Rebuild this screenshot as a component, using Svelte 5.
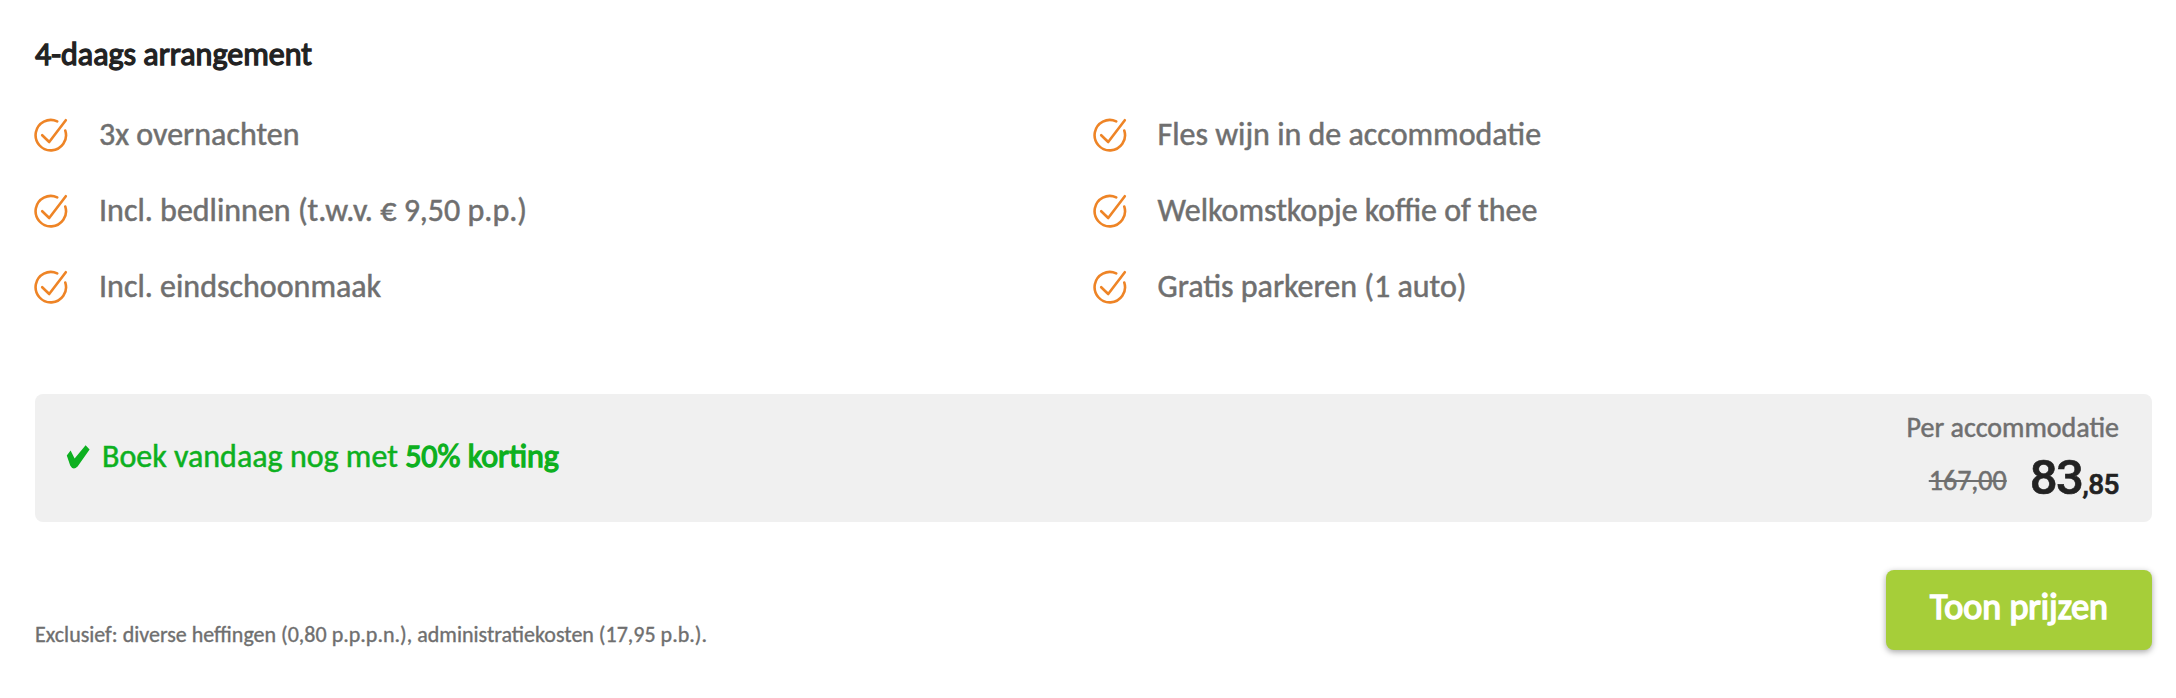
<script>
  const usps = [
    { text: "3x overnachten" },
    { text: "Fles wijn in de accommodatie" },
    { text: "Incl. bedlinnen (t.w.v. € 9,50 p.p.)" },
    { text: "Welkomstkopje koffie of thee" },
    { text: "Incl. eindschoonmaak" },
    { text: "Gratis parkeren (1 auto)" },
  ];
</script>

<section class="arrangement">
  <h2>4-daags arrangement</h2>

  <ul class="usps">
    {#each usps as usp}
      <li>
        <svg class="icon" viewBox="0 0 34 34" fill="none">
          <path d="M23.2 3.4A15.2 15.2 0 1 0 31.3 12.6" />
          <path d="M8.2 17.2L15.2 24L31.8 2.2" />
        </svg>
        <span>{usp.text}</span>
      </li>
    {/each}
  </ul>

  <div class="price-bar">
    <div class="discount">
      <svg class="check" viewBox="0 0 24 24">
        <path d="M0.8 10.6L4.6 5.6L8.6 13.4L19.6 0.3L23.6 4.6L11.6 21.4Q7.2 26 4.2 20.4Z" />
      </svg>
      <p>Boek vandaag nog met <strong>50% korting</strong></p>
    </div>
    <div class="price">
      <span class="label">Per accommodatie</span>
      <div class="amounts">
        <span class="old">167,00</span>
        <span class="new">83<small>,85</small></span>
      </div>
    </div>
  </div>

  <div class="bottom">
    <p class="costs">Exclusief: diverse heffingen (0,80 p.p.p.n.), administratiekosten (17,95 p.b.).</p>
    <button type="button">Toon prijzen</button>
  </div>
</section>

<style>
  :global(body) {
    margin: 0;
    background: #fff;
  }
  .arrangement {
    box-sizing: border-box;
    height: 698px;
    padding: 35px 24px 0 35px;
    font-family: Calibri, Carlito, Lato, sans-serif;
    font-size: 32px;
    color: #6f6f6f;
    -webkit-text-stroke: 0.5px;
  }
  h2,
  p,
  ul {
    margin: 0;
    padding: 0;
  }
  h2 {
    font-size: 32px;
    line-height: 40px;
    font-weight: 400;
    color: #222;
    -webkit-text-stroke: 1.3px;
  }
  .usps {
    display: grid;
    grid-template-columns: 1fr 1fr;
    grid-auto-rows: 76px;
    margin-top: 22px;
    list-style: none;
  }
  li {
    display: flex;
    align-items: center;
    gap: 31px;
    margin-left: -1px;
    line-height: 40px;
  }
  li span {
    padding-bottom: 1px;
  }
  .icon {
    width: 34px;
    height: 34px;
    stroke: #ee8426;
    stroke-width: 2.6;
    stroke-linecap: round;
    stroke-linejoin: round;
  }
  .price-bar {
    display: flex;
    align-items: center;
    justify-content: space-between;
    box-sizing: border-box;
    height: 128px;
    margin-top: 69px;
    padding: 0 33px 0 31px;
    border-radius: 8px;
    background: #f0f0f0;
  }
  .discount {
    display: flex;
    align-items: center;
    gap: 12px;
    margin-bottom: 3px;
    color: #0db020;
    line-height: 40px;
  }
  .discount strong {
    font-weight: 400;
    -webkit-text-stroke: 1.3px;
  }
  .check {
    width: 24px;
    height: 24px;
    fill: #0db020;
  }
  .price {
    display: flex;
    flex-direction: column;
    align-items: flex-end;
  }
  .label {
    font-size: 28px;
    line-height: 36px;
  }
  .amounts {
    display: flex;
    align-items: flex-start;
    gap: 23px;
    height: 61px;
  }
  .old {
    padding-top: 5px;
    font-size: 28px;
    line-height: 60px;
    text-decoration: line-through;
  }
  .new {
    padding-top: 2px;
    font-family: Roboto, sans-serif;
    font-size: 49px;
    line-height: 60px;
    font-weight: 500;
    letter-spacing: -1.5px;
    color: #222;
    -webkit-text-stroke: 0.6px;
  }
  .new small {
    font-size: 28px;
    letter-spacing: -0.5px;
  }
  .bottom {
    display: flex;
    align-items: flex-end;
    justify-content: space-between;
    height: 128px;
  }
  .costs {
    padding-bottom: 1px;
    font-size: 22px;
    line-height: 28px;
    -webkit-text-stroke: 0.35px;
  }
  button {
    width: 266px;
    height: 80px;
    padding: 0 0 6px;
    border: 0;
    border-radius: 8px;
    background: #a6ce39;
    box-shadow: 0 2px 6px rgba(0, 0, 0, 0.35);
    font: 400 36px Calibri, Carlito, Lato, sans-serif;
    color: #fff;
    -webkit-text-stroke: 1.5px;
  }
</style>
